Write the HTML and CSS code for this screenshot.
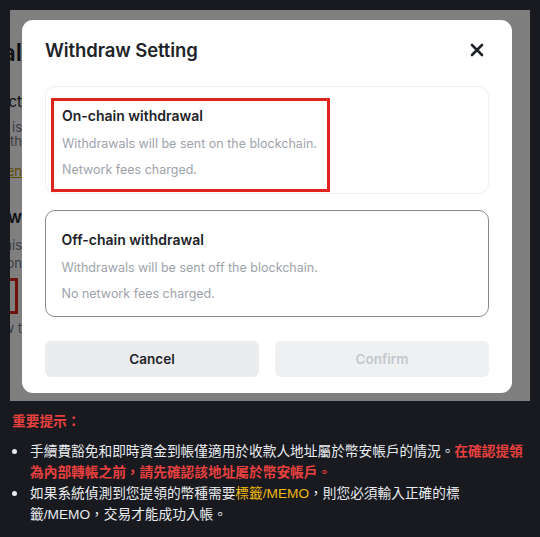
FILE: index.html
```html
<!DOCTYPE html>
<html lang="zh-Hant">
<head>
<meta charset="utf-8">
<title>Withdraw Setting</title>
<link rel="stylesheet" href="styles.css">
</head>
<body>
<div class="shot">
  <div class="bgpage">
    <div class="frag f-title"><span>Withdrawal</span></div>
    <div class="frag f-label"><span>Select</span></div>
    <div class="frag f-sub"><span>Address is</span></div>
    <div class="frag f-sub2"><span>with</span></div>
    <div class="frag f-link"><span>Open</span></div>
    <div class="frag f-head"><span>Withdraw</span></div>
    <div class="frag f-sub3"><span>this</span></div>
    <div class="frag f-sub4"><span>reason</span></div>
    <div class="frag f-box"><span class="redbox">a</span></div>
    <div class="frag f-sub5"><span>w t</span></div>
  </div>
  <div class="overlay">
    <div class="modal">
      <div class="modal-head">
        <h1 class="modal-title">Withdraw Setting</h1>
        <svg class="close" width="14" height="14" viewBox="0 0 14 14" aria-hidden="true">
          <path d="M2 2 L12 12 M12 2 L2 12" stroke="#1e2329" stroke-width="2.6" stroke-linecap="round"/>
        </svg>
      </div>
      <div class="option option-on">
        <div class="opt-title">On-chain withdrawal</div>
        <div class="opt-desc">Withdrawals will be sent on the blockchain.</div>
        <div class="opt-desc">Network fees charged.</div>
        <div class="highlight"></div>
      </div>
      <div class="option option-off">
        <div class="opt-title">Off-chain withdrawal</div>
        <div class="opt-desc">Withdrawals will be sent off the blockchain.</div>
        <div class="opt-desc">No network fees charged.</div>
      </div>
      <div class="actions">
        <div class="btn btn-cancel">Cancel</div>
        <div class="btn btn-confirm">Confirm</div>
      </div>
    </div>
  </div>
</div>
<div class="notes">
  <div class="notes-title">重要提示：</div>
  <ul class="notes-list">
    <li><span>手續費豁免和即時資金到帳僅適用於收款人地址屬於幣安帳戶的情況。<b class="red">在確認提領為內部轉帳之前，請先確認該地址屬於幣安帳戶。</b></span></li>
    <li><span>如果系統偵測到您提領的幣種需要<span class="yellow">標籤/MEMO</span>，則您必須輸入正確的標籤/MEMO，交易才能成功入帳。</span></li>
  </ul>
</div>
</body>
</html>
```
FILE: styles.css
```css
* { box-sizing: border-box; }
html, body { margin: 0; padding: 0; }
body {
  background: #181a20;
  width: 540px;
  height: 537px;
  overflow: hidden;
  font-family: "Liberation Sans", "Noto Sans CJK TC", sans-serif;
}
.shot {
  position: relative;
  margin: 10px 10px 0 10px;
  height: 391px;
  background: #ffffff;
  overflow: hidden;
}
.bgpage {
  width: 14px;
  font-family: "Inter", sans-serif;
  color: #1e2329;
}
.frag {
  display: flex;
  justify-content: flex-end;
  white-space: nowrap;
  overflow: hidden;
  width: 12px;
}
.f-title { margin-top: 26px; font-size: 24px; font-weight: 600; height: 34px; line-height: 34px; }
.f-label { margin-top: 22px; font-size: 15px; height: 20px; line-height: 20px; }
.f-sub { margin-top: 8px; font-size: 13px; color: #707a8a; height: 14px; line-height: 14px; }
.f-sub2 { font-size: 13px; color: #707a8a; height: 14px; line-height: 14px; }
.f-link { margin-top: 16px; font-size: 13px; color: #c99400; height: 16px; line-height: 14px; text-decoration: underline; }
.f-head { margin-top: 26px; font-size: 17px; font-weight: 600; height: 22px; line-height: 22px; }
.f-sub3 { margin-top: 8px; font-size: 13px; color: #707a8a; height: 18px; line-height: 18px; }
.f-sub4 { font-size: 13px; color: #707a8a; height: 18px; line-height: 18px; }
.f-box { margin-top: 6px; height: 40px; width: 8px; }
.redbox { display: block; width: 20px; height: 36px; border: 3px solid #e0231c; font-size: 14px; line-height: 36px; flex: none; }
.f-sub5 { margin-top: 2px; font-size: 13px; color: #707a8a; height: 16px; line-height: 16px; }

.overlay {
  position: absolute;
  inset: 0;
  background: rgba(0, 0, 0, 0.5);
  padding: 10px 18px 8px 12px;
}
.modal {
  background: #ffffff;
  border-radius: 11px;
  height: 373px;
  padding: 0 23px 16px 23px;
  display: flex;
  flex-direction: column;
  font-family: "Inter", "Noto Sans", sans-serif;
  color: #1e2329;
}
.modal-head {
  height: 62px;
  margin-bottom: 6px;
  display: flex;
  align-items: center;
  justify-content: space-between;
}
.modal-title {
  margin: 0;
  font-size: 18.5px;
  font-weight: 600;
  letter-spacing: -0.1px;
}
.close { margin-right: 5px; }
.option {
  position: relative;
  border-radius: 10px;
  padding: 16px 16px 10px 16px;
}
.option-on { border: 1px solid #eeeff1; margin-bottom: 16px; }
.option-off { border: 1.5px solid #8a8a8a; padding: 15.5px 15.5px 9.5px 15.5px; }
.opt-title {
  font-size: 14px;
  font-weight: 600;
  line-height: 26px;
}
.opt-title + .opt-desc { margin-top: 2px; }
.opt-desc {
  font-size: 12.5px;
  line-height: 26px;
  color: #9ea3ab;
}
.highlight {
  position: absolute;
  left: 5px;
  top: 11px;
  width: 279px;
  height: 94px;
  border: 3px solid #e0231c;
}
.actions {
  margin-top: 24px;
  display: flex;
  gap: 16px;
}
.btn {
  flex: 1;
  height: 36px;
  border-radius: 6px;
  display: flex;
  align-items: center;
  justify-content: center;
  font-size: 13.5px;
  font-weight: 600;
}
.btn-cancel { background: #eaecef; color: #1e2329; }
.btn-confirm { background: #eef0f2; color: #c4c8ce; }

.notes {
  padding: 10px 10px 0 12px;
  color: #eaecef;
  font-size: 13.7px;
  line-height: 21px;
  font-family: "Liberation Sans", "Noto Sans CJK TC", sans-serif;
}
.notes-title {
  color: #e8403f;
  font-weight: 700;
}
.notes-list {
  list-style: none;
  margin: 9px 0 0 0;
  padding: 0;
}
.notes-list li {
  display: flex;
  gap: 13px;
}
.notes-list li::before {
  content: "";
  flex: none;
  width: 5px;
  height: 5px;
  border-radius: 50%;
  background: #eaecef;
  margin-top: 8px;
}
.red { color: #e8403f; font-weight: 700; }
.yellow { color: #f0b90b; }
```
